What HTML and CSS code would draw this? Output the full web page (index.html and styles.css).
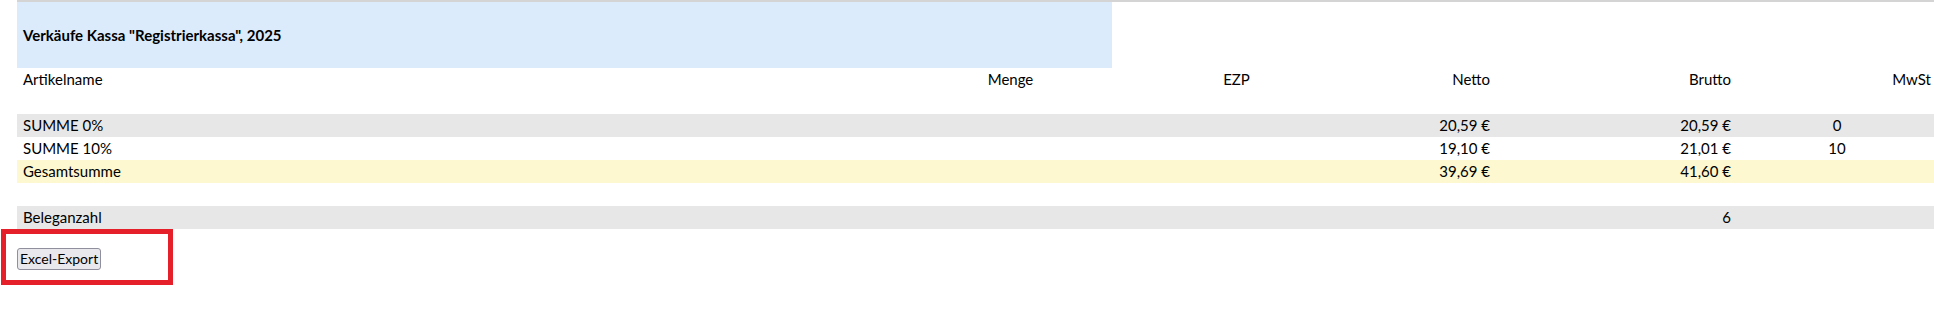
FILE: index.html
```html
<!DOCTYPE html>
<html lang="de">
<head>
<meta charset="utf-8">
<title>Verkäufe Kassa</title>
<link rel="stylesheet" href="styles.css">
</head>
<body>
<div class="report">
  <div class="title-box"><h1 class="title">Verkäufe Kassa "Registrierkassa", 2025</h1></div>
  <div class="row">
    <div class="cell">Artikelname</div>
    <div class="cell center">Menge</div>
    <div class="cell center">EZP</div>
    <div class="cell right">Netto</div>
    <div class="cell right">Brutto</div>
    <div class="cell right">MwSt</div>
  </div>
  <div class="row"></div>
  <div class="row gray">
    <div class="cell">SUMME 0%</div>
    <div class="cell"></div>
    <div class="cell"></div>
    <div class="cell right">20,59 €</div>
    <div class="cell right">20,59 €</div>
    <div class="cell center">0</div>
  </div>
  <div class="row">
    <div class="cell">SUMME 10%</div>
    <div class="cell"></div>
    <div class="cell"></div>
    <div class="cell right">19,10 €</div>
    <div class="cell right">21,01 €</div>
    <div class="cell center">10</div>
  </div>
  <div class="row yellow">
    <div class="cell">Gesamtsumme</div>
    <div class="cell"></div>
    <div class="cell"></div>
    <div class="cell right">39,69 €</div>
    <div class="cell right">41,60 €</div>
    <div class="cell"></div>
  </div>
  <div class="row"></div>
  <div class="row gray">
    <div class="cell">Beleganzahl</div>
    <div class="cell"></div>
    <div class="cell"></div>
    <div class="cell"></div>
    <div class="cell right">6</div>
    <div class="cell"></div>
  </div>
  <div class="actions">
    <button class="btn" type="button">Excel-Export</button>
    <span class="highlight"></span>
  </div>
</div>
</body>
</html>
```

FILE: styles.css
```css
html {
  overflow: hidden;
  background: #ffffff;
}

body {
  margin: 0;
  padding: 0;
  min-height: 313px;
  font-family: Lato, "Liberation Sans", Arial, sans-serif;
  font-size: 15px;
  color: #000000;
}

.report {
  position: relative;
  margin-left: 17px;
  width: 1920px;
  border-top: 2px solid #d4d4d4;
}

.title-box {
  width: 1095px;
  height: 66px;
  background: #dbebfc;
  display: flex;
  align-items: center;
  padding: 0 6px;
  box-sizing: border-box;
}

.title {
  margin: 0;
  font-size: 15px;
  font-weight: bold;
}

.row {
  display: grid;
  grid-template-columns: 923px 141px 311px 104px 241px 200px;
  height: 23px;
  line-height: 23px;
}

.row.gray {
  background: #e7e7e7;
}

.row.yellow {
  background: #fdf8cf;
}

.cell {
  padding: 0 6px;
  white-space: nowrap;
}

.center {
  text-align: center;
}

.right {
  text-align: right;
}

.actions {
  padding-top: 19px;
  height: 22px;
}

.btn {
  width: 84px;
  height: 22px;
  padding: 0 2px;
  white-space: nowrap;
  font-family: Lato, "Liberation Sans", Arial, sans-serif;
  font-size: 14px;
  line-height: 20px;
  color: #000000;
  background: #e9e9ed;
  border: 1px solid #8f8f9d;
  border-radius: 3px;
}

.highlight {
  position: absolute;
  left: -16px;
  top: 227px;
  width: 162px;
  height: 46px;
  border: 5px solid #e5202a;
}
```
